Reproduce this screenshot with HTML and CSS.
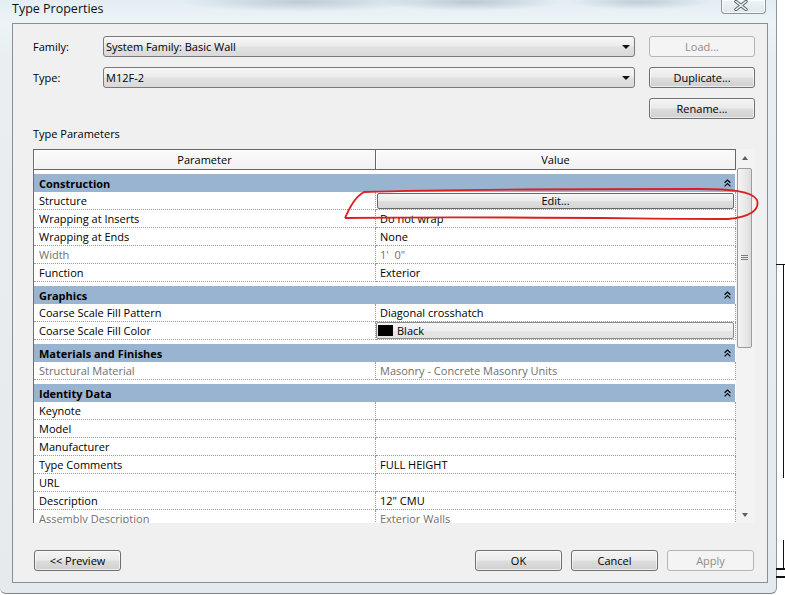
FILE: index.html
```html
<!DOCTYPE html>
<html>
<head>
<meta charset="utf-8">
<link rel="stylesheet" href="styles.css">
</head>
<body>
<div class="desktop">
  <div class="window">
    <div class="titlebar">
      <span class="title">Type Properties</span>
      <div class="close">
        <svg width="14" height="11" viewBox="0 0 14 11"><path d="M2 1.5 L12 9.5 M12 1.5 L2 9.5" stroke="#56636d" stroke-width="3.4" stroke-linecap="round" fill="none"/><path d="M2 1.5 L12 9.5 M12 1.5 L2 9.5" stroke="#f4f7f9" stroke-width="1.6" stroke-linecap="round" fill="none"/></svg>
      </div>
    </div>
    <div class="client">
      <div class="form">
        <span class="flabel">Family:</span>
        <div class="combo"><span>System Family: Basic Wall</span><span class="drop"></span></div>
        <span></span>
        <button class="btn" disabled>Load...</button>
        <span class="flabel">Type:</span>
        <div class="combo"><span>M12F-2</span><span class="drop"></span></div>
        <span></span>
        <button class="btn">Duplicate...</button>
        <span></span><span></span><span></span>
        <button class="btn">Rename...</button>
      </div>
      <div class="section-label">Type Parameters</div>
      <div class="params">
        <div class="table">
          <div class="thead">
            <div class="th">Parameter</div>
            <div class="th">Value</div>
          </div>
          <div class="group"><span>Construction</span><svg class="chev" width="7" height="8" viewBox="0 0 7 8"><path d="M0.6 3.8 L3.5 1 L6.4 3.8 M0.6 7.4 L3.5 4.6 L6.4 7.4" stroke="#000" stroke-width="1.2" fill="none"/></svg></div>
          <div class="row"><div class="cell p">Structure</div><div class="cell v pad1"><div class="cellbtn center">Edit...</div></div></div>
          <div class="row"><div class="cell p">Wrapping at Inserts</div><div class="cell v">Do not wrap</div></div>
          <div class="row"><div class="cell p">Wrapping at Ends</div><div class="cell v">None</div></div>
          <div class="row"><div class="cell p dis">Width</div><div class="cell v dis">1'&nbsp; 0"</div></div>
          <div class="row"><div class="cell p">Function</div><div class="cell v">Exterior</div></div>
          <div class="group"><span>Graphics</span><svg class="chev" width="7" height="8" viewBox="0 0 7 8"><path d="M0.6 3.8 L3.5 1 L6.4 3.8 M0.6 7.4 L3.5 4.6 L6.4 7.4" stroke="#000" stroke-width="1.2" fill="none"/></svg></div>
          <div class="row"><div class="cell p">Coarse Scale Fill Pattern</div><div class="cell v">Diagonal crosshatch</div></div>
          <div class="row"><div class="cell p">Coarse Scale Fill Color</div><div class="cell v pad0"><div class="cellbtn colorbtn"><span class="swatch"></span>Black</div></div></div>
          <div class="group"><span>Materials and Finishes</span><svg class="chev" width="7" height="8" viewBox="0 0 7 8"><path d="M0.6 3.8 L3.5 1 L6.4 3.8 M0.6 7.4 L3.5 4.6 L6.4 7.4" stroke="#000" stroke-width="1.2" fill="none"/></svg></div>
          <div class="row"><div class="cell p dis">Structural Material</div><div class="cell v dis">Masonry - Concrete Masonry Units</div></div>
          <div class="group"><span>Identity Data</span><svg class="chev" width="7" height="8" viewBox="0 0 7 8"><path d="M0.6 3.8 L3.5 1 L6.4 3.8 M0.6 7.4 L3.5 4.6 L6.4 7.4" stroke="#000" stroke-width="1.2" fill="none"/></svg></div>
          <div class="row"><div class="cell p">Keynote</div><div class="cell v"></div></div>
          <div class="row"><div class="cell p">Model</div><div class="cell v"></div></div>
          <div class="row"><div class="cell p">Manufacturer</div><div class="cell v"></div></div>
          <div class="row"><div class="cell p">Type Comments</div><div class="cell v">FULL HEIGHT</div></div>
          <div class="row"><div class="cell p">URL</div><div class="cell v"></div></div>
          <div class="row"><div class="cell p">Description</div><div class="cell v">12" CMU</div></div>
          <div class="row"><div class="cell p dis">Assembly Description</div><div class="cell v dis">Exterior Walls</div></div>
        </div>
        <div class="scrollbar">
          <div class="sarrow"><span class="tri-up"></span></div>
          <div class="thumb">
            <svg width="7" height="6" viewBox="0 0 7 6"><path d="M0 0.5 H7 M0 2.5 H7 M0 4.5 H7" stroke="#7a7a7a" stroke-width="1"/></svg>
          </div>
          <div class="track"></div>
          <div class="sarrow"><span class="tri-down"></span></div>
        </div>
      </div>
      <div class="footer">
        <button class="btn wide">&lt;&lt; Preview</button>
        <div class="spacer"></div>
        <button class="btn wide">OK</button>
        <button class="btn wide">Cancel</button>
        <button class="btn wide" disabled>Apply</button>
      </div>
    </div>
  </div>
  <div class="bg-line h1"></div>
  <div class="bg-line v1"></div>
  <div class="bg-line v2"></div>
  <div class="bg-line h2"></div>
  <div class="bg-line h3"></div>
  <svg class="annotation" width="785" height="595" viewBox="0 0 785 595">
    <path d="M345 218 C350 207 355 197 364 192 C420 190 600 189 700 189 C730 189 752 191 757 200 C760 210 750 217 728 219 C650 219 500 216 345 218" stroke="#dc1f1f" stroke-width="1.8" fill="none" stroke-linejoin="round"/>
  </svg>
</div>
</body>
</html>
```
FILE: styles.css
```css
* { box-sizing: border-box; }
html, body { margin: 0; padding: 0; }
body {
  width: 785px;
  height: 595px;
  overflow: hidden;
  background: #ffffff;
  font-family: "Open Sans", "Noto Sans", sans-serif;
  font-size: 11px;
  color: #000;
}
.desktop { position: relative; width: 785px; height: 595px; }

.window {
  width: 777px;
  height: 594px;
  border-right: 1px solid #8c979f;
  border-bottom: 1px solid #7c8790;
  border-radius: 0 0 6px 6px;
  background:
    radial-gradient(ellipse 120px 10px at 300px 2px, rgba(120,140,160,0.35), rgba(120,140,160,0) 100%),
    radial-gradient(ellipse 90px 9px at 470px 2px, rgba(110,130,150,0.35), rgba(110,130,150,0) 100%),
    radial-gradient(ellipse 70px 8px at 640px 2px, rgba(110,130,150,0.3), rgba(110,130,150,0) 100%),
    linear-gradient(to bottom, #e2edf3 0, #edf4f7 22px, #e8eef1 60px, #e4eaee 100%);
}

.titlebar {
  height: 23px;
  display: flex;
  justify-content: space-between;
  align-items: flex-start;
  padding: 0 10px 0 12px;
}
.title {
  font-size: 12.5px;
  line-height: 18px;
  color: #111;
}
.close {
  width: 45px;
  height: 14px;
  border: 1px solid #8796a2;
  border-top: none;
  border-radius: 0 0 4px 4px;
  background: linear-gradient(#eef4f7, #dfe8ee);
  box-shadow: inset 0 0 0 1px rgba(255,255,255,0.7);
  display: flex;
  justify-content: center;
  align-items: flex-start;
  padding-top: 0;
  margin-left: auto;
}
.close svg { margin-left: -6px; }

.client {
  margin-left: 12px;
  width: 756px;
  height: 560px;
  border: 1px solid #8a8f93;
  background: #f0f0f0;
  padding: 12px 12px 11px 20px;
  display: flex;
  flex-direction: column;
}

.form {
  display: grid;
  grid-template-columns: 70px 532px 14px 106px;
  grid-template-rows: 21px 21px 21px;
  row-gap: 10px;
}
.flabel {
  display: flex;
  align-items: center;
  padding-left: 0;
}
.combo {
  border: 1px solid #7a7a7a;
  border-radius: 3px;
  background: linear-gradient(#f7f7f7 0%, #ececec 45%, #e1e1e1 55%, #d9d9d9 100%);
  display: flex;
  align-items: center;
  justify-content: space-between;
  padding: 0 4px 0 2px;
  height: 21px;
}
.drop {
  width: 0; height: 0;
  border-left: 4px solid transparent;
  border-right: 4px solid transparent;
  border-top: 4px solid #111;
  margin-right: 0;
}

.btn {
  font-family: inherit;
  font-size: 11px;
  color: #000;
  border: 1px solid #707070;
  border-radius: 3px;
  background: linear-gradient(#f3f3f3 0%, #ebebeb 48%, #dddddd 52%, #d0d0d0 100%);
  box-shadow: inset 0 0 0 1px rgba(255,255,255,0.6);
  padding: 0;
  margin: 0;
  height: 21px;
  text-align: center;
  line-height: 19px;
}
.btn:disabled {
  color: #8d8d8d;
  border-color: #b3b6b8;
  background: #f4f4f4;
  box-shadow: none;
}
.btn.wide { width: 87px; }

.section-label {
  margin: 8px 0 8px 0;
  height: 14px;
  line-height: 14px;
}

.params {
  display: flex;
  height: 374px;
}
.table {
  width: 703px;
  height: 374px;
  border-left: 1px solid #6e6e6e;
  background: #ffffff;
  overflow: hidden;
}
.thead {
  display: grid;
  grid-template-columns: 342px 360px;
  height: 21px;
  border-top: 1px solid #676767;
  border-bottom: 1px solid #676767;
  background: linear-gradient(#fbfbfb, #f1f1f1);
}
.th {
  display: flex;
  align-items: center;
  justify-content: center;
  border-right: 1px solid #676767;
  box-shadow: inset 1px 1px 0 #ffffff;
}
.group {
  margin-top: 4px;
  height: 18px;
  width: 701px;
  background: #99b4d1;
  display: flex;
  align-items: center;
  justify-content: space-between;
  padding: 0 4px 0 5px;
  font-weight: bold;
}
.row {
  display: grid;
  grid-template-columns: 342px 360px;
  height: 18px;
}
.cell {
  border-bottom: 1px dotted #9a9a9a;
  border-right: 1px dotted #9a9a9a;
  line-height: 17px;
  padding-left: 5px;
  white-space: nowrap;
  overflow: hidden;
}
.cell.v { padding-left: 4px; }
.cell.pad1 { padding: 1px 1px 1px 1px; }
.cell.pad0 { padding: 0 1px 0 0; }
.dis { color: #6f6f6f; }

.cellbtn {
  height: 16px;
  border: 1px solid #6a6a6a;
  border-radius: 2px;
  background: linear-gradient(#f6f6f6 0%, #ececec 50%, #dedede 52%, #d6d6d6 100%);
  line-height: 14px;
  display: flex;
  align-items: center;
}
.cellbtn.center { justify-content: center; }
.colorbtn {
  height: 17px;
  border-color: #8a8a8a;
  padding-left: 1px;
  background: linear-gradient(#f5f5f5 0%, #efefef 50%, #e6e6e6 52%, #e2e2e2 100%);
}
.swatch {
  width: 15px;
  height: 11px;
  background: #000;
  margin-right: 4px;
}

.scrollbar {
  width: 19px;
  height: 374px;
  background: #f3f3f3;
  display: flex;
  flex-direction: column;
  align-items: center;
  padding-right: 2px;
}
.sarrow {
  height: 17px;
  width: 15px;
  display: flex;
  align-items: center;
  justify-content: center;
}
.tri-up, .tri-down {
  width: 0; height: 0;
  border-left: 3.5px solid transparent;
  border-right: 3.5px solid transparent;
}
.tri-up { border-bottom: 4px solid #5f5f5f; }
.tri-down { border-top: 4px solid #5f5f5f; }
.thumb {
  margin-top: 2px;
  width: 15px;
  height: 180px;
  border: 1px solid #9c9c9c;
  border-radius: 2px;
  background: linear-gradient(to right, #f4f4f4, #e8e8e8 60%, #dcdcdc);
  display: flex;
  align-items: center;
  justify-content: center;
}
.track { flex: 1; }

.footer {
  margin-top: 27px;
  display: flex;
  gap: 9px;
  height: 21px;
  padding: 0 1px 0 1px;
}
.spacer { flex: 1; }

.bg-line { position: absolute; background: #111; }
.bg-line.h1 { left: 776px; top: 264px; width: 9px; height: 1px; }
.bg-line.v1 { left: 783px; top: 264px; width: 1px; height: 214px; }
.bg-line.v2 { left: 783px; top: 540px; width: 1px; height: 29px; }
.bg-line.h2 { left: 776px; top: 568px; width: 9px; height: 2px; }
.bg-line.h3 { left: 776px; top: 576px; width: 9px; height: 2px; }

.annotation {
  position: absolute;
  left: 0;
  top: 0;
  pointer-events: none;
}
```
